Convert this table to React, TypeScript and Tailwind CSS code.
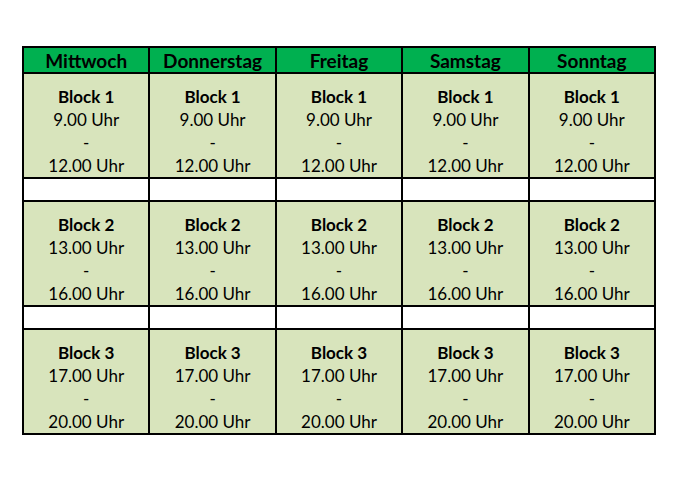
const days = ["Mittwoch", "Donnerstag", "Freitag", "Samstag", "Sonntag"];

const blocks = [
  { name: "Block 1", from: "9.00 Uhr", to: "12.00 Uhr" },
  { name: "Block 2", from: "13.00 Uhr", to: "16.00 Uhr" },
  { name: "Block 3", from: "17.00 Uhr", to: "20.00 Uhr" },
];

function BlockCell({ name, from, to }: { name: string; from: string; to: string }) {
  return (
    <div className="h-[103px] bg-[#d8e4bc] flex flex-col items-center justify-end text-[17px] leading-[23px]">
      <p className="font-bold">{name}</p>
      <p>{from}</p>
      <p>-</p>
      <p>{to}</p>
    </div>
  );
}

export default function App() {
  return (
    <div
      className="min-h-[480px] w-[679px] bg-white pt-[46px] pl-[22px] text-black"
      style={{ fontFamily: "Lato, 'Open Sans', sans-serif" }}
    >
      <div className="w-[634px] border-2 border-black bg-black grid grid-cols-5 gap-[2px]">
        {days.map((d) => (
          <div
            key={d}
            className="h-[24px] bg-[#00b050] flex items-center justify-center font-bold text-[19px] leading-none"
          >
            {d}
          </div>
        ))}
        {blocks.map((b, i) => (
          <>
            {days.map((d) => (
              <BlockCell key={`${b.name}-${d}`} {...b} />
            ))}
            {i < blocks.length - 1 &&
              days.map((d) => (
                <div key={`gap-${i}-${d}`} className="h-[21px] bg-white" />
              ))}
          </>
        ))}
      </div>
    </div>
  );
}
